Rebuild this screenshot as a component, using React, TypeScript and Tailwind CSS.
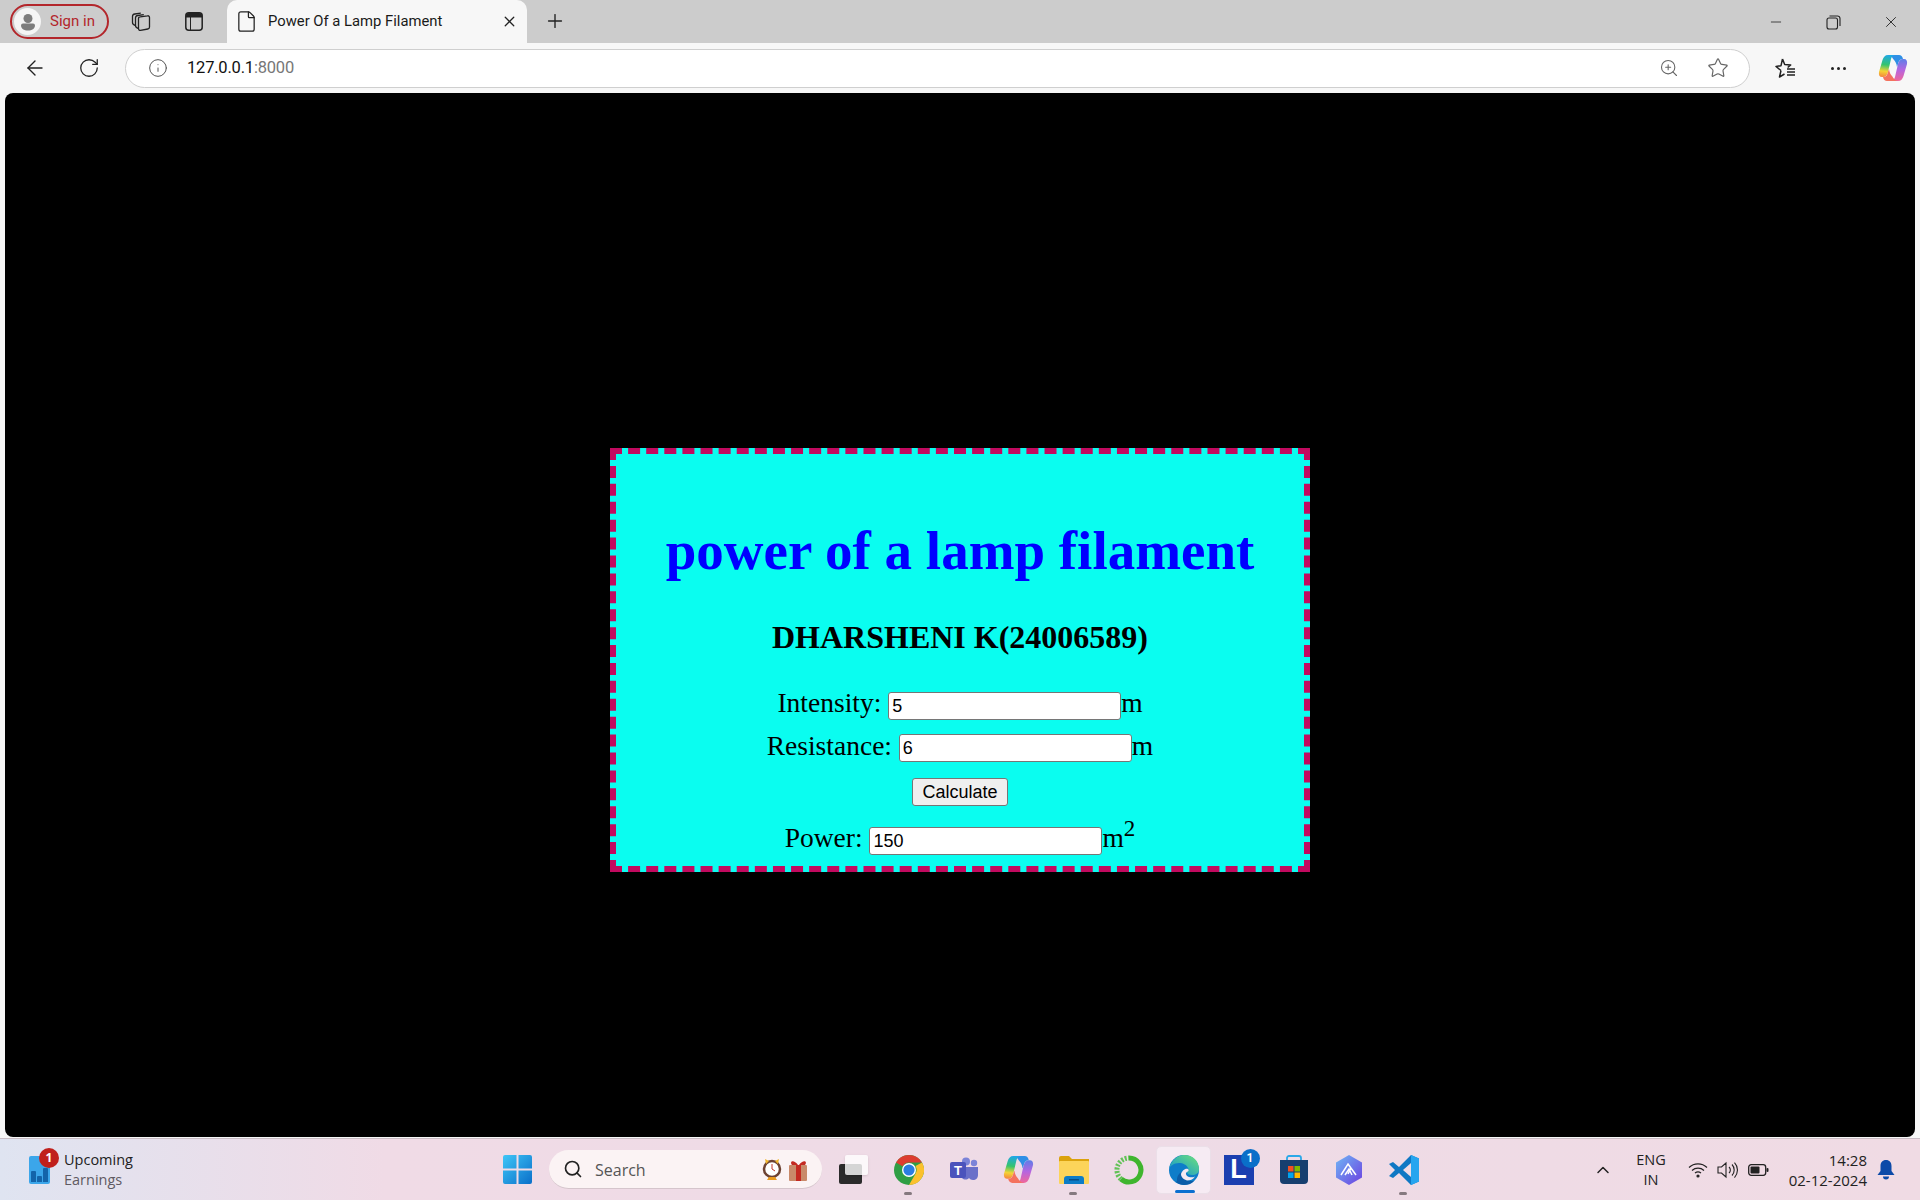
import { ArrowLeft, ChevronUp, File, Info, Minus, Plus, RotateCw, Search, Star, X, ZoomIn } from 'lucide-react'

function Row({ label, value, unit, className }: { label: string; value: string; unit: React.ReactNode; className: string }) {
  return (
    <div className={`text-center text-[27.5px] leading-[28px] ${className}`}>
      {label}{' '}
      <input
        readOnly
        value={value}
        className="inline-block w-[233px] h-[28px] align-middle border border-[#767676] rounded-[3px] bg-white px-[3px] text-[18px] text-black font-['Liberation_Sans',Arial,sans-serif]"
      />
      {unit}
    </div>
  )
}

function TabStrip() {
  return (
    <div className="h-[43px] bg-[#cccccc] flex items-end shrink-0 text-[#1a1a1a]">
      <div className="ml-[10px] mb-[4px] w-[99px] h-[35px] rounded-full border-2 border-[#b3262b] flex items-center pl-[2px] gap-[9px]">
        <div className="w-[27px] h-[27px] rounded-full bg-[#f5f5f5] flex items-center justify-center">
          <svg width="20" height="20" viewBox="0 0 20 20">
            <circle cx="10" cy="6.500" r="4.500" fill="#7d7d7d" />
            <path d="M3 13.500a2 2 0 0 1 2-2h10a2 2 0 0 1 2 2c0 3-3 5-7 5s-7-2-7-5z" fill="#7d7d7d" />
          </svg>
        </div>
        <span className="text-[15px] text-[#b3262b] font-['Roboto',sans-serif]">Sign in</span>
      </div>
      <div className="ml-[21px] mb-[11px] w-[22px] h-[22px]">
        <svg width="22" height="22" viewBox="0 0 22 22" fill="none" stroke="#222" strokeWidth="1.300" strokeLinejoin="round">
          <path d="M8.500 8.500c0-1 .8-1.700 1.700-1.700l7.300-1c1.200-.2 2 .6 2 1.700v9.500c0 1-.6 1.800-1.700 2l-7.300 1.300c-1.200.2-2-.6-2-1.700z" />
          <path d="M8.500 18.500C6.500 18 5.500 17 5.500 15.500V8c0-1.500 1-2.300 2.300-2.500l6-.8" />
          <path d="M5.500 15.500C3.500 15 2.500 14 2.500 12.500V6.500c0-1.500 1-2.300 2.300-2.500l6-.8" />
        </svg>
      </div>
      <svg className="ml-[33px] mb-[12px]" width="18" height="19" viewBox="0 0 18 19" fill="none">
        <rect x="0.800" y="0.800" width="16.400" height="17.400" rx="3" stroke="#222" strokeWidth="1.500" />
        <path d="M1 4a3 3 0 0 1 3-3h10a3 3 0 0 1 3 3v1.500H1z" fill="#222" />
        <path d="M5.500 5v13" stroke="#222" strokeWidth="1" />
      </svg>
      <div className="ml-[24px] w-[300px] h-[43px] bg-[#f7f7f7] rounded-t-[10px] flex items-center pl-[8px] pr-[9px]">
        <File size={23} strokeWidth={1.3} color="#222" />
        <span className="ml-[10px] text-[14.8px] font-['Roboto',sans-serif] flex-1">Power Of a Lamp Filament</span>
        <X size={17} strokeWidth={1.8} color="#222" />
      </div>
      <div className="ml-[17px] mb-[11px]">
        <Plus size={22} strokeWidth={1.5} color="#222" />
      </div>
      <div className="ml-auto mb-[12px] flex items-center">
        <Minus size={16} strokeWidth={1.2} color="#222" />
        <svg className="ml-[42px]" width="15" height="15" viewBox="0 0 15 15" fill="none" stroke="#222" strokeWidth="1.100">
          <rect x="1" y="3" width="10.500" height="11" rx="2" />
          <path d="M3.500 1h8a2.500 2.500 0 0 1 2.500 2.500v7.500" />
        </svg>
        <X className="ml-[41px] mr-[20px]" size={18} strokeWidth={1.2} color="#222" />
      </div>
    </div>
  )
}

function Toolbar() {
  return (
    <div className="h-[50px] bg-[#f7f7f7] flex items-center shrink-0">
      <ArrowLeft className="ml-[23px]" size={24} strokeWidth={1.4} color="#222" />
      <RotateCw className="ml-[31px]" size={22} strokeWidth={1.4} color="#222" />
      <div className="ml-[25px] w-[1625px] h-[39px] bg-white border border-[#cfcfcf] rounded-full flex items-center pl-[22px] pr-[20px] font-['Roboto',sans-serif] text-[16.5px]">
        <Info size={20} strokeWidth={1.2} color="#555" />
        <span className="ml-[19px] text-[#111] tracking-[-0.2px]">127.0.0.1<span className="text-[#777]">:8000</span></span>
        <ZoomIn className="ml-auto" size={20} strokeWidth={1.3} color="#666" />
        <Star className="ml-[28px]" size={22} strokeWidth={1.3} color="#666" />
      </div>
      <svg className="ml-[23px]" width="24" height="24" viewBox="0 0 24 24" fill="none" stroke="#222" strokeWidth="1.500" strokeLinejoin="round">
        <path d="M9.500 3l2.200 5.500 6 .4-3 2.600M8 14.500L6.500 21l5-3M8 14.500L3 10.500l5-.8L9.500 3" />
        <path d="M14 13h8M14 16h8M14 19h8" />
      </svg>
      <div className="ml-[34px] flex gap-[3px]">
        <div className="w-[3px] h-[3px] rounded-full bg-[#222]" />
        <div className="w-[3px] h-[3px] rounded-full bg-[#222]" />
        <div className="w-[3px] h-[3px] rounded-full bg-[#222]" />
      </div>
      <div className="ml-[32px]">
        <CopilotIcon size={30} />
      </div>
    </div>
  )
}

function CopilotIcon({ size }: { size: number }) {
  return (
    <svg width={size} height={size} viewBox="0 0 30 30">
      <defs>
        <linearGradient id={`cpl${size}`} x1="0.500" y1="0" x2="0.400" y2="1">
          <stop offset="0" stopColor="#1fa7e8" />
          <stop offset="0.45" stopColor="#35c46e" />
          <stop offset="0.75" stopColor="#f4d434" />
          <stop offset="1" stopColor="#f58a3c" />
        </linearGradient>
        <linearGradient id={`cpr${size}`} x1="0.500" y1="0" x2="0.500" y2="1">
          <stop offset="0" stopColor="#5c7ee8" />
          <stop offset="0.5" stopColor="#b565e0" />
          <stop offset="1" stopColor="#f0679a" />
        </linearGradient>
      </defs>
      <path d="M10 2h11c2 0 3.500 1.500 4 4-3 0-4.500 2-5 5l-1 3c-.5-4-2-6-3-7-1.500-2-3-5-6-5z" fill="#2f8fe6" />
      <path d="M10 2h8c-3 0-4.500 2-5 4l-3 13c-.7 3-2.500 5-5 5H4c-2.500 0-3.500-2-3-5L4.500 7C5.500 4 7 2 10 2z" fill={`url(#cpl${size})`} />
      <path d="M20 28h-8c3 0 4.500-2 5-4l3-13c.7-3 2.500-5 5-5h1c2.500 0 3.500 2 3 5L25.500 23c-1 3-2.500 5-5.500 5z" fill={`url(#cpr${size})`} />
      <path d="M20 28H9c-2 0-3.500-1.500-4-4 3 0 4.500-2 5-5l1-3c.5 4 2 6 3 7 1.500 2 3 5 6 5z" fill="#f4725e" />
    </svg>
  )
}

function ChromeIcon() {
  return (
    <svg width="30" height="30" viewBox="0 0 30 30">
      <circle cx="15" cy="15" r="15" fill="#2f9e44" />
      <path d="M15 0a15 15 0 0 1 13 7.500H15a7.500 7.500 0 0 0-6.500 3.800L2 7.500A15 15 0 0 1 15 0z" fill="#dd3c30" />
      <path d="M28 7.500A15 15 0 0 1 15 30l6.500-11.300A7.500 7.500 0 0 0 21.500 11z" fill="#fbc02d" />
      <circle cx="15" cy="15" r="7" fill="#fff" />
      <circle cx="15" cy="15" r="5.600" fill="#2a7de1" />
    </svg>
  )
}

function TeamsIcon() {
  return (
    <svg width="30" height="30" viewBox="0 0 30 30">
      <circle cx="25" cy="8" r="3.200" fill="#7b83d8" />
      <circle cx="17" cy="6.500" r="4" fill="#7b83d8" />
      <path d="M18 12h11v8c0 3-2 5-5 5-2 0-3-1-4-2-2 2-5 2-7 0-1-1-2-3-2-5v-6z" fill="#6a70c9" />
      <rect x="1" y="7" width="16" height="16" rx="2" fill="#4b53bc" />
      <text x="9" y="20" textAnchor="middle" fontSize="13" fontWeight="700" fill="#fff" fontFamily="Liberation Sans">T</text>
    </svg>
  )
}

function FolderIcon() {
  return (
    <svg width="30" height="28" viewBox="0 0 30 28">
      <path d="M0 2a2 2 0 0 1 2-2h8l3 3h17v3H0z" fill="#dba20d" />
      <rect x="0" y="5" width="30" height="23" rx="1" fill="#fcd45a" />
      <path d="M5 28v-5a3 3 0 0 1 3-3h14a3 3 0 0 1 3 3v5z" fill="#0d7cc6" />
      <rect x="10" y="23" width="10" height="1.500" fill="#064d86" />
    </svg>
  )
}

function RingIcon() {
  return (
    <svg width="30" height="30" viewBox="0 0 30 30" fill="none">
      <path d="M15 3a12 12 0 1 1-8 21" stroke="#3fb52e" strokeWidth="5" />
      <path d="M7 24A12 12 0 0 1 15 3" stroke="#62c257" strokeWidth="5" strokeDasharray="2 1.500" />
    </svg>
  )
}

function EdgeIcon() {
  return (
    <svg width="30" height="30" viewBox="0 0 30 30">
      <defs>
        <linearGradient id="edgeTop" x1="0" y1="1" x2="1" y2="0">
          <stop offset="0" stopColor="#0c8fd6" />
          <stop offset="1" stopColor="#6fe27a" />
        </linearGradient>
      </defs>
      <circle cx="15" cy="15" r="15" fill="#0e7dc9" />
      <path d="M0 14C2 5 9 0 15 0c9 0 15 6 15 14 0 4-3 6-7 6-3 0-5-1-5-3 1-1 2-2 1-4-1-3-5-5-9-5-5 0-9 3-10 6z" fill="url(#edgeTop)" />
      <path d="M13 17c0 5 4 9 10 9h2c-3 3-6 4-10 4-3 0-6-1-8-3 1-1 1-1 1-2 0-4 2-7 5-8z" fill="#0b5da8" />
      <path d="M12 19c1-3 4-6 7-5 1 1 1 2-1 3-2 1-1 4 2 5 2 .5 4 .5 6-.5-2 3-5 4-8 4-3-1-6-3-6-6.500z" fill="#f5e9f1" />
    </svg>
  )
}

function LIcon() {
  return (
    <div className="relative w-[30px] h-[30px] bg-[#1b3fb0] flex items-center justify-center">
      <span className="text-white text-[27px] font-bold leading-none font-['Liberation_Sans',sans-serif]">L</span>
      <span className="absolute -top-[6px] -right-[6px] w-[19px] h-[19px] rounded-full bg-[#0a6fc9] text-white text-[12px] font-semibold flex items-center justify-center font-['Roboto',sans-serif]">1</span>
    </div>
  )
}

function StoreIcon() {
  return (
    <svg width="30" height="30" viewBox="0 0 30 30">
      <path d="M8 6V3a2 2 0 0 1 2-2h10a2 2 0 0 1 2 2v3" fill="none" stroke="#2aa8e8" strokeWidth="1.800" />
      <path d="M1 5h28v20a4 4 0 0 1-4 4H5a4 4 0 0 1-4-4z" fill="#173f6f" />
      <rect x="9" y="11" width="5.500" height="5.500" fill="#f25022" />
      <rect x="15.500" y="11" width="5.500" height="5.500" fill="#7fba00" />
      <rect x="9" y="17.500" width="5.500" height="5.500" fill="#00a4ef" />
      <rect x="15.500" y="17.500" width="5.500" height="5.500" fill="#ffb900" />
    </svg>
  )
}

function ArcIcon() {
  return (
    <svg width="30" height="30" viewBox="0 0 30 30">
      <defs>
        <linearGradient id="arcFill" x1="0" y1="0" x2="1" y2="1">
          <stop offset="0" stopColor="#6fb7f5" />
          <stop offset="1" stopColor="#6c3fe0" />
        </linearGradient>
      </defs>
      <path d="M15 0l13 7.500v15L15 30 2 22.500v-15z" fill="url(#arcFill)" />
      <path d="M7 20L14 9l3 4-3 6M14 9l8 11M11 20l4-6 3 6" fill="none" stroke="#fff" strokeWidth="1.500" />
    </svg>
  )
}

function VsCodeIcon() {
  return (
    <svg width="30" height="30" viewBox="0 0 30 30">
      <path d="M22 0l8 3.500v23L22 30 10 18l-6 5-4-2 6-6-6-6 4-2 6 5z" fill="#0f78c4" />
      <path d="M22 0l8 3.500v23L22 30z" fill="#27a5ef" />
      <path d="M22 8l-8 7 8 7z" fill="#f0dce6" />
    </svg>
  )
}

function TaskCell({ children, dot, active }: { children: React.ReactNode; dot?: boolean; active?: boolean }) {
  return (
    <div className={`relative w-[55px] h-[48px] flex items-center justify-center ${active ? 'bg-[#f6ebf3] rounded-[5px] border border-[#ebdfe8]' : ''}`}>
      {children}
      {dot && <div className="absolute -bottom-[1px] left-[23px] w-[8px] h-[3px] rounded-full bg-[#85797f]" />}
      {active && <div className="absolute bottom-0 left-[18px] w-[20px] h-[3px] rounded-full bg-[#0a6fd0]" />}
    </div>
  )
}

function Taskbar() {
  return (
    <div className="h-[62px] shrink-0 flex items-center border-t border-[#c9bdc5] bg-[linear-gradient(90deg,#dfe4f1_0%,#f0dbe6_20%,#eedbe6_60%,#f0dbe4_100%)] font-['Open_Sans','Noto_Sans',sans-serif] text-[#222]">
      <div className="relative ml-[29px] w-[21px] h-[28px] mt-[1px] rounded-[2px] bg-[#3ba6ea] flex items-end justify-center gap-[1px] pb-[2px]">
        <div className="w-[5px] h-[11px] bg-[#1364a9] rounded-t-[1px]" />
        <div className="w-[5px] h-[6px] bg-[#1364a9] rounded-t-[1px]" />
        <div className="w-[5px] h-[14px] bg-[#1364a9] rounded-t-[1px]" />
        <div className="absolute -top-[8px] left-[10px] w-[20px] h-[20px] rounded-full bg-[#c0201c] text-white text-[12px] font-bold flex items-center justify-center">1</div>
      </div>
      <div className="ml-[14px] w-[439px] flex flex-col text-[14.5px] leading-[20px]">
        <span>Upcoming</span>
        <span className="text-[#5f5a62]">Earnings</span>
      </div>
      <svg width="29" height="29" viewBox="0 0 29 29">
        <defs>
          <linearGradient id="winGrad" x1="0" y1="0" x2="1" y2="1">
            <stop offset="0" stopColor="#3fc6f7" />
            <stop offset="1" stopColor="#0a6fc9" />
          </linearGradient>
        </defs>
        <path d="M0 2a2 2 0 0 1 2-2h11.500v13.500H0zM15.500 0H27a2 2 0 0 1 2 2v11.500H15.500zM0 15.500h13.500V29H2a2 2 0 0 1-2-2zM15.500 15.500H29V27a2 2 0 0 1-2 2H15.500z" fill="url(#winGrad)" />
      </svg>
      <div className="ml-[17px] w-[273px] h-[39px] rounded-full bg-[#fbf3f4] border-b border-[#d5c5cc] flex items-center pl-[14px] pr-[14px]">
        <Search size={20} strokeWidth={2} color="#222" />
        <span className="ml-[12px] text-[16px] text-[#555] mt-[2px]">Search</span>
        <svg className="ml-auto" width="46" height="26" viewBox="0 0 46 26">
          <circle cx="10" cy="13" r="8" fill="#fff" stroke="#6d4232" strokeWidth="2.500" />
          <path d="M3 3l4 2-3 3zM17 3l-4 2 3 3z" fill="#f0b429" />
          <path d="M5 24h10l-2-3H7z" fill="#e99a1e" />
          <path d="M10 8v5l3 2" stroke="#c0392b" strokeWidth="1" fill="none" />
          <rect x="27" y="9" width="18" height="16" rx="1" fill="#c98a6a" />
          <rect x="34" y="9" width="5" height="16" fill="#c42a22" />
          <path d="M36 9c-4-6-9-4-6 0zM37 9c4-6 9-4 6 0z" fill="#c42a22" />
        </svg>
      </div>
      <div className="ml-[4px] flex items-center">
        <TaskCell>
          <div className="relative w-[29px] h-[29px]">
            <div className="absolute left-0 bottom-0 w-[23px] h-[20px] rounded-[2px] bg-[#2b2b2b]" />
            <div className="absolute right-0 top-0 w-[23px] h-[20px] rounded-[2px] bg-white/80 shadow-sm" />
          </div>
        </TaskCell>
        <TaskCell dot><ChromeIcon /></TaskCell>
        <TaskCell><TeamsIcon /></TaskCell>
        <TaskCell><CopilotIcon size={31} /></TaskCell>
        <TaskCell dot><FolderIcon /></TaskCell>
        <TaskCell><RingIcon /></TaskCell>
        <TaskCell active><EdgeIcon /></TaskCell>
        <TaskCell><LIcon /></TaskCell>
        <TaskCell><StoreIcon /></TaskCell>
        <TaskCell><ArcIcon /></TaskCell>
        <TaskCell dot><VsCodeIcon /></TaskCell>
      </div>
      <ChevronUp className="ml-[162px]" size={20} strokeWidth={1.8} color="#222" />
      <div className="ml-[14px] w-[48px] flex flex-col items-center text-[14.5px] leading-[20px]">
        <span>ENG</span>
        <span>IN</span>
      </div>
      <svg className="ml-[13px]" width="20" height="16" viewBox="0 0 20 16" fill="none" stroke="#222" strokeWidth="1.200">
        <path d="M1 5.500a13 13 0 0 1 18 0M4 8.500a9 9 0 0 1 12 0M7 11a5 5 0 0 1 6 0" />
        <circle cx="10" cy="14" r="1" fill="#222" />
      </svg>
      <svg className="ml-[9px]" width="21" height="18" viewBox="0 0 21 18" fill="none" stroke="#222" strokeWidth="1.100">
        <path d="M1 6h3.500L9 2v14l-4.500-4H1zM12 6a4 4 0 0 1 0 6M15 3.500a8 8 0 0 1 0 11M17.500 1.500a11 11 0 0 1 0 15" />
      </svg>
      <svg className="ml-[10px]" width="21" height="12" viewBox="0 0 21 12" fill="none">
        <rect x="0.700" y="0.700" width="17" height="10.600" rx="2.500" stroke="#222" strokeWidth="1.300" />
        <rect x="2.500" y="2.500" width="9" height="7" rx="1" fill="#222" />
        <rect x="18.500" y="4" width="2" height="4" rx="1" fill="#222" />
      </svg>
      <div className="w-[98px] flex flex-col items-end text-[15px] leading-[20px]">
        <span>14:28</span>
        <span>02-12-2024</span>
      </div>
      <svg className="ml-[10px]" width="18" height="20" viewBox="0 0 18 20">
        <path d="M9 0c3.500 0 5.500 2.500 5.500 6v5l3 4H.5l3-4V6C3.500 2.500 5.500 0 9 0z" fill="#0c4aa8" />
        <path d="M6 16.500h6a3 3 0 0 1-6 0z" fill="#0c4aa8" />
      </svg>
    </div>
  )
}

export default function App() {
  return (
    <div className="w-[1920px] h-[1200px] flex flex-col overflow-hidden bg-[#f7f7f7]">
      <TabStrip />
      <Toolbar />
      <main className="flex-1 mx-[5px] mb-[1px] bg-black rounded-[8px] flex items-start justify-center pt-[355px]">
        <div className="w-[700px] h-[424px] border-[6px] border-dashed border-[#c20a5f] bg-[#0afdf0] text-black font-['Liberation_Serif','Times_New_Roman',serif] pt-[65px]">
          <h1 className="text-center text-[55px] leading-[64px] font-bold text-[#0000ff]">power of a lamp filament</h1>
          <h2 className="mt-[35px] text-center text-[32px] leading-[38px] font-bold">DHARSHENI K(24006589)</h2>
          <Row className="mt-[33px]" label="Intensity:" value="5" unit="m" />
          <Row className="mt-[12px]" label="Resistance:" value="6" unit="m" />
          <div className="mt-[16px] text-center leading-none">
            <button className="w-[96px] h-[28px] border border-[#767676] rounded-[3px] bg-[#efefef] text-[18px] leading-none text-black font-['Liberation_Sans',Arial,sans-serif]">Calculate</button>
          </div>
          <Row className="mt-[18px]" label="Power:" value="150" unit={<span>m<sup className="text-[23px]">2</sup></span>} />
        </div>
      </main>
      <Taskbar />
    </div>
  )
}
